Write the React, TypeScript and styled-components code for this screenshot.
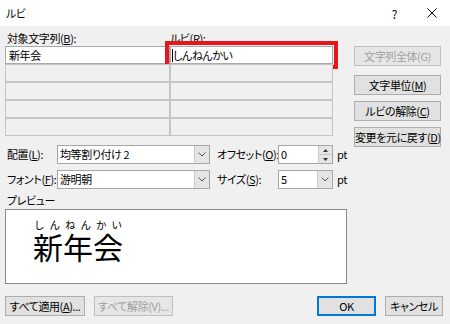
import React from 'react';
import styled, { createGlobalStyle } from 'styled-components';

const GlobalStyle = createGlobalStyle`
  html, body {
    margin: 0;
    padding: 0;
    background: #f0f0f0;
  }
  body {
    font-family: "Noto Sans CJK JP", "Noto Sans", sans-serif;
    font-size: 11px;
    line-height: 15px;
    letter-spacing: -0.4px;
    font-feature-settings: "palt";
    color: #000;
  }
`;

const Dialog = styled.div`
  width: 450px;
  height: 324px;
  box-sizing: border-box;
  background: #f0f0f0;
  display: flex;
  flex-direction: column;
  overflow: hidden;
`;

const TitleBar = styled.div`
  height: 26px;
  flex: none;
  background: #fff;
  display: flex;
  align-items: center;
  padding-left: 6px;
`;

const Title = styled.div`
  flex: 1;
  font-size: 11px;
  line-height: 26px;
`;

const TitleButton = styled.div`
  width: 37px;
  height: 26px;
  display: flex;
  align-items: center;
  justify-content: center;
  font-size: 12px;
`;

const Content = styled.div`
  flex: 1;
  display: flex;
  flex-direction: column;
  padding: 0 7px 0 5px;
`;

const TopSection = styled.div`
  display: flex;
  align-items: flex-start;
`;

const MainColumn = styled.div`
  width: 349px;
  flex: none;
  display: flex;
  flex-direction: column;
`;

const LabelRow = styled.div`
  display: grid;
  grid-template-columns: 165px 163px;
  padding-top: 5px;
  height: 15px;
`;

const Label = styled.span<{ $indent?: number }>`
  padding-left: ${(p) => p.$indent ?? 2}px;
  white-space: nowrap;
`;

const EntryGrid = styled.div`
  display: grid;
  grid-template-columns: 165px 163px;
  grid-auto-rows: 18px;
`;

const Cell = styled.div<{ $active?: boolean; $marked?: boolean }>`
  box-sizing: border-box;
  border: 1px solid ${(p) => (p.$active ? '#a9a9a9' : '#c4c4c4')};
  background: ${(p) => (p.$active ? '#fff' : '#f0f0f0')};
  display: flex;
  align-items: center;
  padding-left: 3px;
  line-height: 16px;
  ${(p) => (p.$marked ? 'outline: 4px solid #e8151d; outline-offset: 1px; padding-left: 1px;' : '')}
`;

const Caret = styled.span`
  display: inline-block;
  width: 0;
  height: 13px;
  border-left: 1px solid #000;
`;

const SideButtons = styled.div`
  width: 87px;
  padding-top: 20px;
  display: flex;
  flex-direction: column;
`;

const Button = styled.button<{ $width?: number; $gap?: number; $default?: boolean }>`
  box-sizing: border-box;
  width: ${(p) => (p.$width ? `${p.$width}px` : '100%')};
  height: 20px;
  margin: 0 0 ${(p) => p.$gap ?? 0}px 0;
  padding: 0;
  background: #e1e1e1;
  border: 1px solid ${(p) => (p.$default ? '#0078d7' : '#adadad')};
  box-shadow: ${(p) => (p.$default ? 'inset 0 0 0 1px #0078d7' : 'none')};
  font-family: inherit;
  font-size: 11px;
  letter-spacing: -0.4px;
  font-feature-settings: "palt";
  line-height: 18px;
  color: #000;
  white-space: nowrap;
  &:disabled {
    color: #a0a0a0;
    border-color: #bfbfbf;
    background: #e6e6e6;
  }
`;

const FormatGrid = styled.div`
  margin-top: 9px;
  display: grid;
  grid-template-columns: 52px 153px 7px 61px 55px auto;
  grid-auto-rows: 19px;
  row-gap: 6px;
  align-items: center;
`;

const FieldLabel = styled.span<{ $indent?: number }>`
  padding-left: ${(p) => p.$indent ?? 2}px;
  white-space: nowrap;
`;

const Field = styled.div`
  box-sizing: border-box;
  height: 19px;
  border: 1px solid #a6a6a6;
  background: #fff;
  display: flex;
  align-items: stretch;
`;

const FieldText = styled.span`
  flex: 1;
  padding-left: 2px;
  line-height: 17px;
  white-space: nowrap;
  overflow: hidden;
`;

const DropButton = styled.span`
  width: 14px;
  background: #e5e5e5;
  border-left: 1px solid #c9c9c9;
  display: flex;
  align-items: center;
  justify-content: center;
`;

const SpinButtons = styled.span`
  width: 13px;
  display: flex;
  flex-direction: column;
  border-left: 1px solid #c9c9c9;
`;

const SpinHalf = styled.span`
  flex: 1;
  background: #e5e5e5;
  display: flex;
  align-items: center;
  justify-content: center;
  & + & {
    border-top: 1px solid #c9c9c9;
  }
`;

const Unit = styled.span`
  padding-left: 4px;
`;

const PreviewLabel = styled.div`
  margin-top: 3px;
  height: 16px;
  line-height: 16px;
  padding-left: 2px;
`;

const PreviewBox = styled.div`
  margin-top: 1px;
  box-sizing: border-box;
  width: 342px;
  height: 75px;
  background: #fff;
  border: 1px solid #8a8a8a;
  padding: 7px 0 0 27px;
`;

const Ruby = styled.div`
  display: inline-flex;
  flex-direction: column;
  letter-spacing: 0;
  font-feature-settings: normal;
`;

const RubyText = styled.div`
  display: flex;
  justify-content: space-between;
  font-size: 10.5px;
  line-height: 12px;
  padding: 0 1px;
`;

const RubyBase = styled.div`
  font-size: 30px;
  line-height: 31px;
`;

const BottomBar = styled.div`
  margin-top: 12px;
  display: flex;
  align-items: center;
`;

const Spacer = styled.div`
  flex: 1;
`;

const Chevron = () => (
  <svg width="8" height="5" viewBox="0 0 8 5">
    <polyline points="0.5,0.5 4,4 7.5,0.5" fill="none" stroke="#555" strokeWidth="1" />
  </svg>
);

const Arrow: React.FC<{ up?: boolean }> = ({ up }) => (
  <svg width="5" height="3" viewBox="0 0 5 3">
    <polygon points={up ? '2.5,0 5,3 0,3' : '0,0 5,0 2.5,3'} fill="#333" />
  </svg>
);

const CloseIcon = () => (
  <svg width="10" height="10" viewBox="0 0 10 10">
    <path d="M0.5 0.5 L9.5 9.5 M9.5 0.5 L0.5 9.5" stroke="#000" strokeWidth="1" />
  </svg>
);

const rows = [0, 1, 2, 3, 4];

export default function App() {
  return (
    <>
      <GlobalStyle />
      <Dialog>
        <TitleBar>
          <Title>ルビ</Title>
          <TitleButton>?</TitleButton>
          <TitleButton>
            <CloseIcon />
          </TitleButton>
        </TitleBar>
        <Content>
          <TopSection>
            <MainColumn>
              <LabelRow>
                <Label>
                  対象文字列(<u>B</u>):
                </Label>
                <Label $indent={0}>ルビ(R):</Label>
              </LabelRow>
              <EntryGrid>
                {rows.map((r) => (
                  <React.Fragment key={r}>
                    <Cell $active={r === 0}>{r === 0 ? '新年会' : ''}</Cell>
                    <Cell $active={r === 0} $marked={r === 0}>
                      {r === 0 ? (
                        <>
                          <Caret />
                          しんねんかい
                        </>
                      ) : (
                        ''
                      )}
                    </Cell>
                  </React.Fragment>
                ))}
              </EntryGrid>

              <FormatGrid>
                <FieldLabel>
                  配置(<u>L</u>):
                </FieldLabel>
                <Field>
                  <FieldText>均等割り付け 2</FieldText>
                  <DropButton>
                    <Chevron />
                  </DropButton>
                </Field>
                <span />
                <FieldLabel $indent={0}>
                  オフセット(<u>O</u>):
                </FieldLabel>
                <Field>
                  <FieldText>0</FieldText>
                  <SpinButtons>
                    <SpinHalf>
                      <Arrow up />
                    </SpinHalf>
                    <SpinHalf>
                      <Arrow />
                    </SpinHalf>
                  </SpinButtons>
                </Field>
                <Unit>pt</Unit>

                <FieldLabel>
                  フォント(<u>F</u>):
                </FieldLabel>
                <Field>
                  <FieldText>游明朝</FieldText>
                  <DropButton>
                    <Chevron />
                  </DropButton>
                </Field>
                <span />
                <FieldLabel $indent={0}>
                  サイズ(<u>S</u>):
                </FieldLabel>
                <Field>
                  <FieldText>5</FieldText>
                  <DropButton>
                    <Chevron />
                  </DropButton>
                </Field>
                <Unit>pt</Unit>
              </FormatGrid>

              <PreviewLabel>プレビュー</PreviewLabel>
              <PreviewBox>
                <Ruby>
                  <RubyText>
                    {'しんねんかい'.split('').map((c, i) => (
                      <span key={i}>{c}</span>
                    ))}
                  </RubyText>
                  <RubyBase>新年会</RubyBase>
                </Ruby>
              </PreviewBox>
            </MainColumn>

            <SideButtons>
              <Button disabled $gap={9}>
                文字列全体(G)
              </Button>
              <Button $gap={6}>
                文字単位(<u>M</u>)
              </Button>
              <Button $gap={6}>
                ルビの解除(<u>C</u>)
              </Button>
              <Button>
                変更を元に戻す(<u>D</u>)
              </Button>
            </SideButtons>
          </TopSection>

          <BottomBar>
            <Button $width={80}>
              すべて適用(<u>A</u>)...
            </Button>
            <Button $width={79} disabled style={{ marginLeft: 9 }}>
              すべて解除(V)...
            </Button>
            <Spacer />
            <Button $width={59} $default>
              OK
            </Button>
            <Button $width={58} style={{ marginLeft: 9 }}>
              キャンセル
            </Button>
          </BottomBar>
        </Content>
      </Dialog>
    </>
  );
}
